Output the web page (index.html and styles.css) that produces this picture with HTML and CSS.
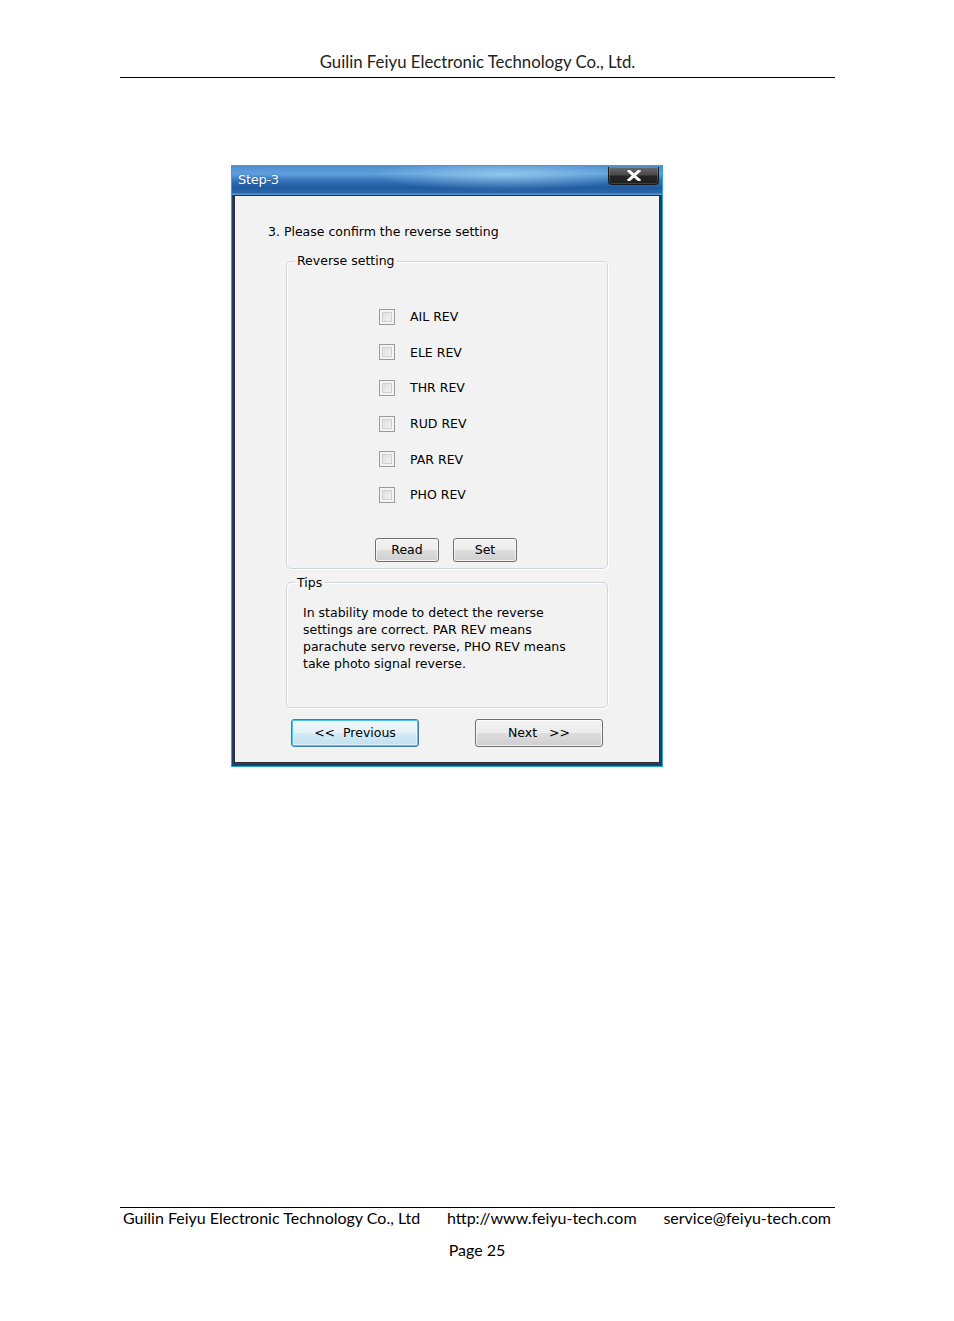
FILE: index.html
```html
<!DOCTYPE html>
<html lang="en">
<head>
<meta charset="utf-8">
<title>Step-3</title>
<link rel="stylesheet" href="styles.css">
</head>
<body>
<div class="page">
  <header class="doc-header">
    <div class="doc-title">Guilin Feiyu Electronic Technology Co., Ltd.</div>
  </header>

  <main class="main">
    <div class="window">
      <div class="titlebar">
        <span class="title">Step-3</span>
        <button class="close" aria-label="Close">
          <svg width="14" height="11" viewBox="0 0 14 11"><path d="M2 1 L12 10 M12 1 L2 10" stroke="#fff" stroke-width="3" stroke-linecap="square" fill="none"/></svg>
        </button>
      </div>
      <div class="client">
        <p class="question">3. Please confirm the reverse setting</p>

        <fieldset class="group reverse">
          <legend>Reverse setting</legend>
          <ul class="checks">
            <li class="check"><span class="box"></span><span class="lbl">AIL REV</span></li>
            <li class="check"><span class="box"></span><span class="lbl">ELE REV</span></li>
            <li class="check"><span class="box"></span><span class="lbl">THR REV</span></li>
            <li class="check"><span class="box"></span><span class="lbl">RUD REV</span></li>
            <li class="check"><span class="box"></span><span class="lbl">PAR REV</span></li>
            <li class="check"><span class="box"></span><span class="lbl">PHO REV</span></li>
          </ul>
          <div class="btnrow">
            <button class="btn small">Read</button>
            <button class="btn small">Set</button>
          </div>
        </fieldset>

        <fieldset class="group tips">
          <legend>Tips</legend>
          <p class="tiptext">In stability mode to detect the reverse<br>settings are correct. PAR REV means<br>parachute servo reverse, PHO REV means<br>take photo signal reverse.</p>
        </fieldset>

        <div class="nav">
          <button class="btn wide focused">&lt;&lt;&nbsp; Previous</button>
          <button class="btn wide">Next &nbsp; &gt;&gt;</button>
        </div>
      </div>
    </div>
  </main>

  <footer class="doc-footer">
    <div class="footline">
      <span>Guilin Feiyu Electronic Technology Co., Ltd</span>
      <span>http://www.feiyu-tech.com</span>
      <span>service@feiyu-tech.com</span>
    </div>
    <div class="pageno">Page 25</div>
  </footer>
</div>
</body>
</html>
```

FILE: styles.css
```css
* { box-sizing: border-box; }
html, body { margin: 0; padding: 0; background: #fff; }

.page {
  width: 954px;
  min-height: 1321px;
  display: flex;
  flex-direction: column;
  font-family: Lato, "Open Sans", sans-serif;
  color: #000;
}

.doc-header {
  width: 715px;
  margin-left: 120px;
  padding-top: 52px;
  border-bottom: 1px solid #000;
  padding-bottom: 5px;
}
.doc-title {
  text-align: center;
  font-size: 16.8px;
  line-height: 20px;
  color: #222;
}

.main {
  padding-top: 87px;
  padding-left: 231px;
}

.window {
  width: 432px;
  border: 1px solid #2aa6d8;
  background: #1d3f6c;
  font-family: "DejaVu Sans", Verdana, sans-serif;
  font-size: 12.5px;
}

.titlebar {
  height: 29px;
  display: flex;
  justify-content: space-between;
  align-items: flex-start;
  padding: 0 3px 0 6px;
  background:
    radial-gradient(ellipse 130px 16px at 63% 30%, rgba(180,226,248,0.6), rgba(180,226,248,0) 100%),
    linear-gradient(to bottom, #4f8fcf 0%, #5e9fdb 28%, #3574b9 50%, #1f5aa0 75%, #2b67ab 92%, #6aa6d6 100%);
}
.title {
  color: #fff;
  font-size: 13px;
  letter-spacing: -0.3px;
  line-height: 27px;
  text-shadow: 0 0 2px rgba(0,0,60,0.4);
}
.close {
  margin-top: 1px;
  width: 51px;
  height: 18px;
  padding: 0;
  border: 1px solid #1a1a1a;
  border-top: none;
  border-radius: 0 0 4px 4px;
  background: linear-gradient(to bottom, #6a6a6a 0%, #4a4a4a 45%, #262626 55%, #1e1e1e 100%);
  display: flex;
  align-items: center;
  justify-content: center;
  box-shadow: inset 0 0 0 1px rgba(255,255,255,0.15);
}

.client {
  margin: 0 2px 3px 2px;
  border: 1px solid #2e2e2e;
  background: #f2f2f2;
  padding: 28px 0 16px 0;
}

.question {
  margin: 0 0 13px 33px;
  line-height: 16px;
}

.group {
  width: 322px;
  margin: 0 auto;
  border: 1px solid #cfd6da;
  border-radius: 5px;
  padding: 0;
  box-shadow: inset 1px 1px 0 #fff, 1px 1px 0 #fff;
}
.group legend {
  margin-left: 8px;
  padding: 0 2px;
  line-height: 16px;
}

.checks {
  list-style: none;
  margin: 0;
  padding: 30px 0 0 92px;
}
.check {
  height: 35.6px;
  display: flex;
  align-items: center;
  gap: 15px;
}
.box {
  width: 16px;
  height: 16px;
  border: 1px solid #9a9b9b;
  background: linear-gradient(135deg, #d6d6d6 0%, #ebebeb 55%, #f8f8f8 100%);
  box-shadow: inset 0 0 0 2px #f4f4f4, inset 0 0 0 3px #cfcfcf;
}

.btnrow {
  display: flex;
  justify-content: center;
  gap: 14px;
  margin-top: 25px;
  padding-bottom: 6px;
  padding-right: 2px;
}

.btn {
  font-family: "DejaVu Sans", Verdana, sans-serif;
  font-size: 12.5px;
  color: #000;
  border: 1px solid #707070;
  border-radius: 3px;
  background: linear-gradient(to bottom, #f3f3f3 0%, #ebebeb 50%, #dddddd 51%, #cfcfcf 100%);
  box-shadow: inset 0 0 0 1px rgba(255,255,255,0.7);
  padding: 0;
}
.btn.small { width: 64px; height: 24px; }
.btn.wide { width: 128px; height: 28px; }
.btn.focused {
  border-color: #3c7fb1;
  background: linear-gradient(to bottom, #f0f8fc 0%, #e4f2fa 50%, #d2eaf6 51%, #c1e0f0 100%);
  box-shadow: inset 0 0 0 1px #48c6e8, inset 0 0 0 2px rgba(255,255,255,0.5);
}

.tips {
  margin-top: 6px;
}
.tiptext {
  margin: 0;
  padding: 13px 0 35px 16px;
  line-height: 17px;
}

.nav {
  display: flex;
  justify-content: space-between;
  padding: 11px 56px 0 56px;
}

.client { padding-bottom: 15px; }

.doc-footer {
  margin-top: auto;
  padding-bottom: 61px;
}
.footline {
  width: 715px;
  margin-left: 120px;
  border-top: 1px solid #000;
  display: flex;
  justify-content: space-between;
  padding: 0 4px 0 3px;
  font-size: 16px;
  line-height: 20px;
}
.pageno {
  text-align: center;
  font-size: 16px;
  line-height: 20px;
  margin-top: 12px;
}
```
